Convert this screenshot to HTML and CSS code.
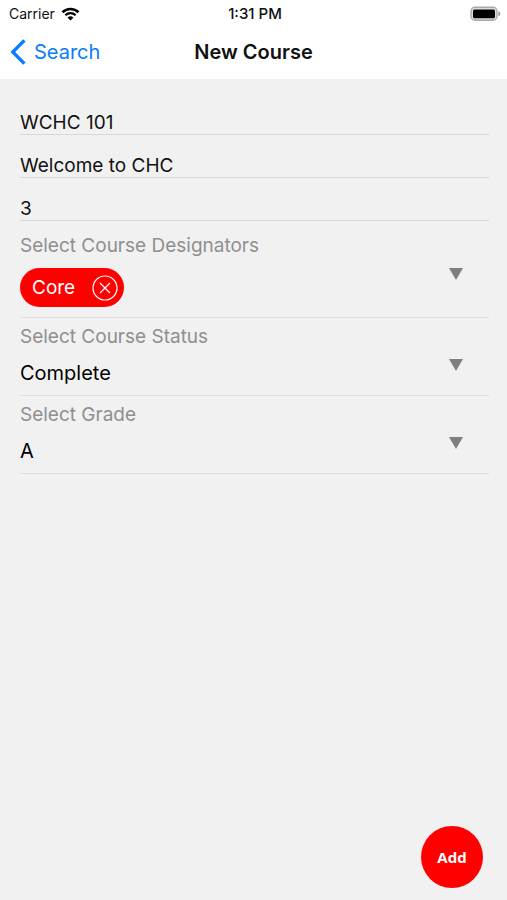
FILE: index.html
```html
<!DOCTYPE html>
<html lang="en">
<head>
<meta charset="utf-8">
<meta name="viewport" content="width=device-width, initial-scale=1">
<title>New Course</title>
<link rel="stylesheet" href="styles.css">
</head>
<body>
<header class="top">
  <div class="status-bar">
    <div class="carrier">
      <span>Carrier</span>
      <svg width="19" height="14" viewBox="0 0 18 14" aria-hidden="true">
        <path d="M1 5.2a11.5 11.5 0 0 1 16 0" fill="none" stroke="#000" stroke-width="2.6"/>
        <path d="M3.9 8.2a7.3 7.3 0 0 1 10.2 0" fill="none" stroke="#000" stroke-width="2.2"/>
        <path d="M9 13.6 6.1 10.7a4.1 4.1 0 0 1 5.8 0z"/>
      </svg>
    </div>
    <span class="time">1:31 PM</span>
    <svg class="battery" width="31" height="16" viewBox="0 0 31 16" aria-hidden="true">
      <rect x="1" y="1.2" width="26" height="13" rx="4" fill="#ddd" stroke="#aaa" stroke-width="1.4"/>
      <rect x="3" y="3.4" width="22" height="8.8" rx="1.5" fill="#000"/>
      <path d="M28.4 5.2c2.6.8 2.6 4.2 0 5z" fill="#999"/>
    </svg>
  </div>
  <nav class="nav-bar">
    <a class="back" href="#search">
      <svg width="16" height="26" viewBox="0 0 16 26" aria-hidden="true">
        <path d="M14.4 1.4 2.8 13l11.6 11.6" fill="none" stroke="currentColor" stroke-width="3.4"/>
      </svg>
      <span>Search</span>
    </a>
    <h1 class="title">New Course</h1>
  </nav>
</header>
<main>
  <form class="form" id="course">
    <input class="text-field" type="text" value="WCHC 101" aria-label="Course code">
    <input class="text-field" type="text" value="Welcome to CHC" aria-label="Course name">
    <input class="text-field" type="text" value="3" aria-label="Credits">
    <div class="field field-first">
      <label class="label" for="designators">Select Course Designators</label>
      <div class="chip">
        <span>Core</span>
        <button class="remove" type="button" aria-label="Remove Core">
          <svg width="26" height="26" viewBox="0 0 26 26" aria-hidden="true">
            <g fill="none" stroke="#fff" stroke-width="1.2"><circle cx="13" cy="13" r="12"/><path d="m8 8 10 10M18 8 8 18"/></g>
          </svg>
        </button>
      </div>
      <button class="open" type="button" id="designators">
        <svg class="arrow" width="14" height="12" viewBox="0 0 14 12" aria-hidden="true"><path d="M0 0h14L7 12z"/></svg>
      </button>
    </div>
    <div class="field">
      <label class="label" for="status">Select Course Status</label>
      <select class="select" id="status"><option>Complete</option></select>
      <svg class="arrow" width="14" height="12" viewBox="0 0 14 12" aria-hidden="true"><path d="M0 0h14L7 12z"/></svg>
    </div>
    <div class="field">
      <label class="label" for="grade">Select Grade</label>
      <select class="select" id="grade"><option>A</option></select>
      <svg class="arrow" width="14" height="12" viewBox="0 0 14 12" aria-hidden="true"><path d="M0 0h14L7 12z"/></svg>
    </div>
  </form>
</main>
<button class="add" type="submit" form="course">Add</button>
</body>
</html>
```
FILE: styles.css
```css
* {
  box-sizing: border-box;
}

body {
  margin: 0;
  min-height: 100vh;
  background: #f1f1f1;
  color: #111;
  font-family: Inter, "Liberation Sans", sans-serif;
  font-size: 19px;
  line-height: 24px;
}

button,
input,
select {
  margin: 0;
  padding: 0;
  border: 0;
  border-radius: 0;
  background: none;
  color: inherit;
  font: inherit;
}

svg {
  display: block;
}

.top {
  background: #fff;
}

.status-bar,
.nav-bar {
  display: grid;
  grid-template-columns: 1fr auto 1fr;
  align-items: center;
}

.status-bar {
  height: 27px;
  padding: 0 6px 0 9px;
  font-size: 14px;
}

.carrier {
  display: flex;
  align-items: center;
  gap: 6px;
}

.time {
  font-size: 15px;
  font-weight: 500;
}

.battery {
  justify-self: end;
}

.nav-bar {
  height: 52px;
  padding: 0 10px 2px;
}

.back {
  display: flex;
  align-items: center;
  gap: 8px;
  color: #0a7cff;
  font-size: 20px;
  text-decoration: none;
}

.title {
  margin: 0;
  font-size: 20px;
  font-weight: 600;
}

.form {
  display: flex;
  flex-direction: column;
  padding: 13px 18px 0 20px;
}

.text-field {
  width: 100%;
  height: 43px;
  padding-top: 19px;
  border-bottom: 1px solid #d8d8d8;
}

.field {
  display: grid;
  grid-template-columns: 1fr auto;
  row-gap: 10px;
  padding: 7px 0 8px;
  border-bottom: 1px solid #dedede;
}

.field-first {
  padding: 13px 0 10px;
}

.label {
  grid-column: 1 / -1;
  color: #8f8f8f;
}

.select {
  grid-area: 2 / 1 / 3 / 3;
  height: 28px;
  appearance: none;
  color: #000;
  font-size: 20px;
}

.arrow {
  grid-area: 2 / 2;
  margin-right: 26px;
  fill: #808080;
  pointer-events: none;
}

.open {
  align-self: start;
}

.chip {
  display: flex;
  align-items: center;
  justify-self: start;
  gap: 17px;
  height: 39px;
  padding: 0 6px 0 12px;
  border-radius: 20px;
  background: #f00;
  color: #fff;
}

.add {
  position: fixed;
  right: 24px;
  bottom: 12px;
  width: 62px;
  height: 62px;
  border-radius: 50%;
  background: #f00;
  color: #fff;
  font-family: "Open Sans", sans-serif;
  font-size: 15px;
  font-weight: 700;
}
```
